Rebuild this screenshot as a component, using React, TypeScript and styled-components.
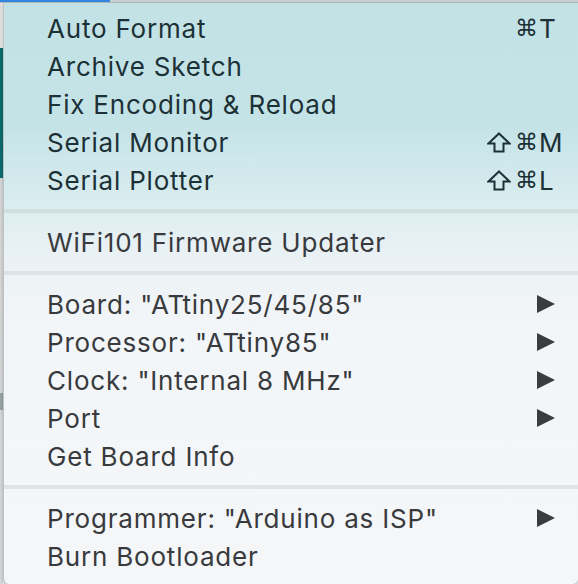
import styled, { createGlobalStyle } from 'styled-components';

const GlobalStyle = createGlobalStyle`
  html, body {
    margin: 0;
    padding: 0;
    background: #e9eaeb;
  }
  body {
    font-family: Inter, "Liberation Sans", sans-serif;
    -webkit-font-smoothing: antialiased;
  }
`;

const Page = styled.div`
  width: 578px;
  height: 584px;
  display: flex;
  flex-direction: column;
  overflow: hidden;
`;

const TopBar = styled.div`
  height: 3px;
  display: flex;
  background: #c9cfd1;
  border-bottom: 1px solid #b6bec1;
  box-sizing: border-box;
`;

const ActiveTab = styled.div`
  width: 110px;
  background: #2f86e0;
`;

const Body = styled.div`
  flex: 1;
  display: flex;
  min-height: 0;
`;

const LeftStrip = styled.div`
  width: 3px;
  display: flex;
  flex-direction: column;
`;

const StripPart = styled.div<{ $h: number; $c: string }>`
  height: ${(p) => p.$h}px;
  flex-shrink: 0;
  background: ${(p) => p.$c};
`;

const Menu = styled.div`
  flex: 1;
  box-sizing: border-box;
  padding: 6px 0 9px;
  border-left: 1px solid #bcc3c6;
  border-radius: 0 0 6px 6px;
  background: linear-gradient(
    180deg,
    #c3e2e6 0px,
    #c4e3e7 120px,
    #d6ebee 190px,
    #e6f0f3 235px,
    #eef3f6 280px,
    #f3f6f8 330px,
    #f4f6f8 100%
  );
  box-shadow: 0 1px 3px rgba(0, 0, 0, 0.25);
`;

const Row = styled.div<{ $dark?: boolean }>`
  height: 38px;
  display: grid;
  grid-template-columns: 1fr auto 26px;
  align-items: center;
  padding: 0 13px 0 43px;
  font-size: 26px;
  letter-spacing: 0.8px;
  color: ${(p) => (p.$dark ? '#1c3136' : '#383a3d')};
  white-space: nowrap;
`;

const Label = styled.span``;

const Mods = styled.span`
  display: flex;
  align-items: center;
  gap: 4px;
  font-family: "DejaVu Sans", sans-serif;
  font-size: 23px;
  letter-spacing: 0;
  padding-right: 1px;
`;

const Key = styled.span`
  text-align: left;
  letter-spacing: 0;
`;

const Arrow = styled.span`
  width: 0;
  height: 0;
  margin-left: -2px;
  border-top: 9.5px solid transparent;
  border-bottom: 9.5px solid transparent;
  border-left: 18px solid #3a3c3f;
`;

const Separator = styled.div<{ $tint?: boolean }>`
  height: 4px;
  margin: 10px 0;
  background: ${(p) => (p.$tint ? '#cfdfe2' : '#dfe3e6')};
`;

const ShiftIcon = () => (
  <svg width="24" height="21" viewBox="0 0 24 21" aria-label="⇧">
    <path
      d="M12 1.5 L22.5 11.5 H16.5 V19.5 H7.5 V11.5 H1.5 Z"
      fill="none"
      stroke="currentColor"
      strokeWidth="2"
      strokeLinejoin="miter"
    />
  </svg>
);

type Item = {
  label: string;
  shift?: boolean;
  keyName?: string;
  submenu?: boolean;
};

const sections: Item[][] = [
  [
    { label: 'Auto Format', keyName: 'T' },
    { label: 'Archive Sketch' },
    { label: 'Fix Encoding & Reload' },
    { label: 'Serial Monitor', shift: true, keyName: 'M' },
    { label: 'Serial Plotter', shift: true, keyName: 'L' },
  ],
  [{ label: 'WiFi101 Firmware Updater' }],
  [
    { label: 'Board: "ATtiny25/45/85"', submenu: true },
    { label: 'Processor: "ATtiny85"', submenu: true },
    { label: 'Clock: "Internal 8 MHz"', submenu: true },
    { label: 'Port', submenu: true },
    { label: 'Get Board Info' },
  ],
  [
    { label: 'Programmer: "Arduino as ISP"', submenu: true },
    { label: 'Burn Bootloader' },
  ],
];

export default function App() {
  return (
    <Page>
      <GlobalStyle />
      <TopBar>
        <ActiveTab />
      </TopBar>
      <Body>
        <LeftStrip>
          <StripPart $h={45} $c="linear-gradient(90deg, #d9d9d9, #f2f2f2)" />
          <StripPart $h={130} $c="#0b6a6c" />
          <StripPart $h={215} $c="#d6d6d6" />
          <StripPart $h={17} $c="#9aa3a3" />
          <StripPart $h={300} $c="#d6d6d6" />
        </LeftStrip>
        <Menu>
          {sections.map((items, si) => (
            <div key={si}>
              {si > 0 && <Separator $tint={si === 1} />}
              {items.map((it) => (
                <Row key={it.label} $dark={si === 0}>
                  <Label>{it.label}</Label>
                  <Mods>
                    {it.shift && <ShiftIcon />}
                    {it.keyName && '⌘'}
                  </Mods>
                  {it.submenu ? <Arrow /> : <Key>{it.keyName}</Key>}
                </Row>
              ))}
            </div>
          ))}
        </Menu>
      </Body>
    </Page>
  );
}
